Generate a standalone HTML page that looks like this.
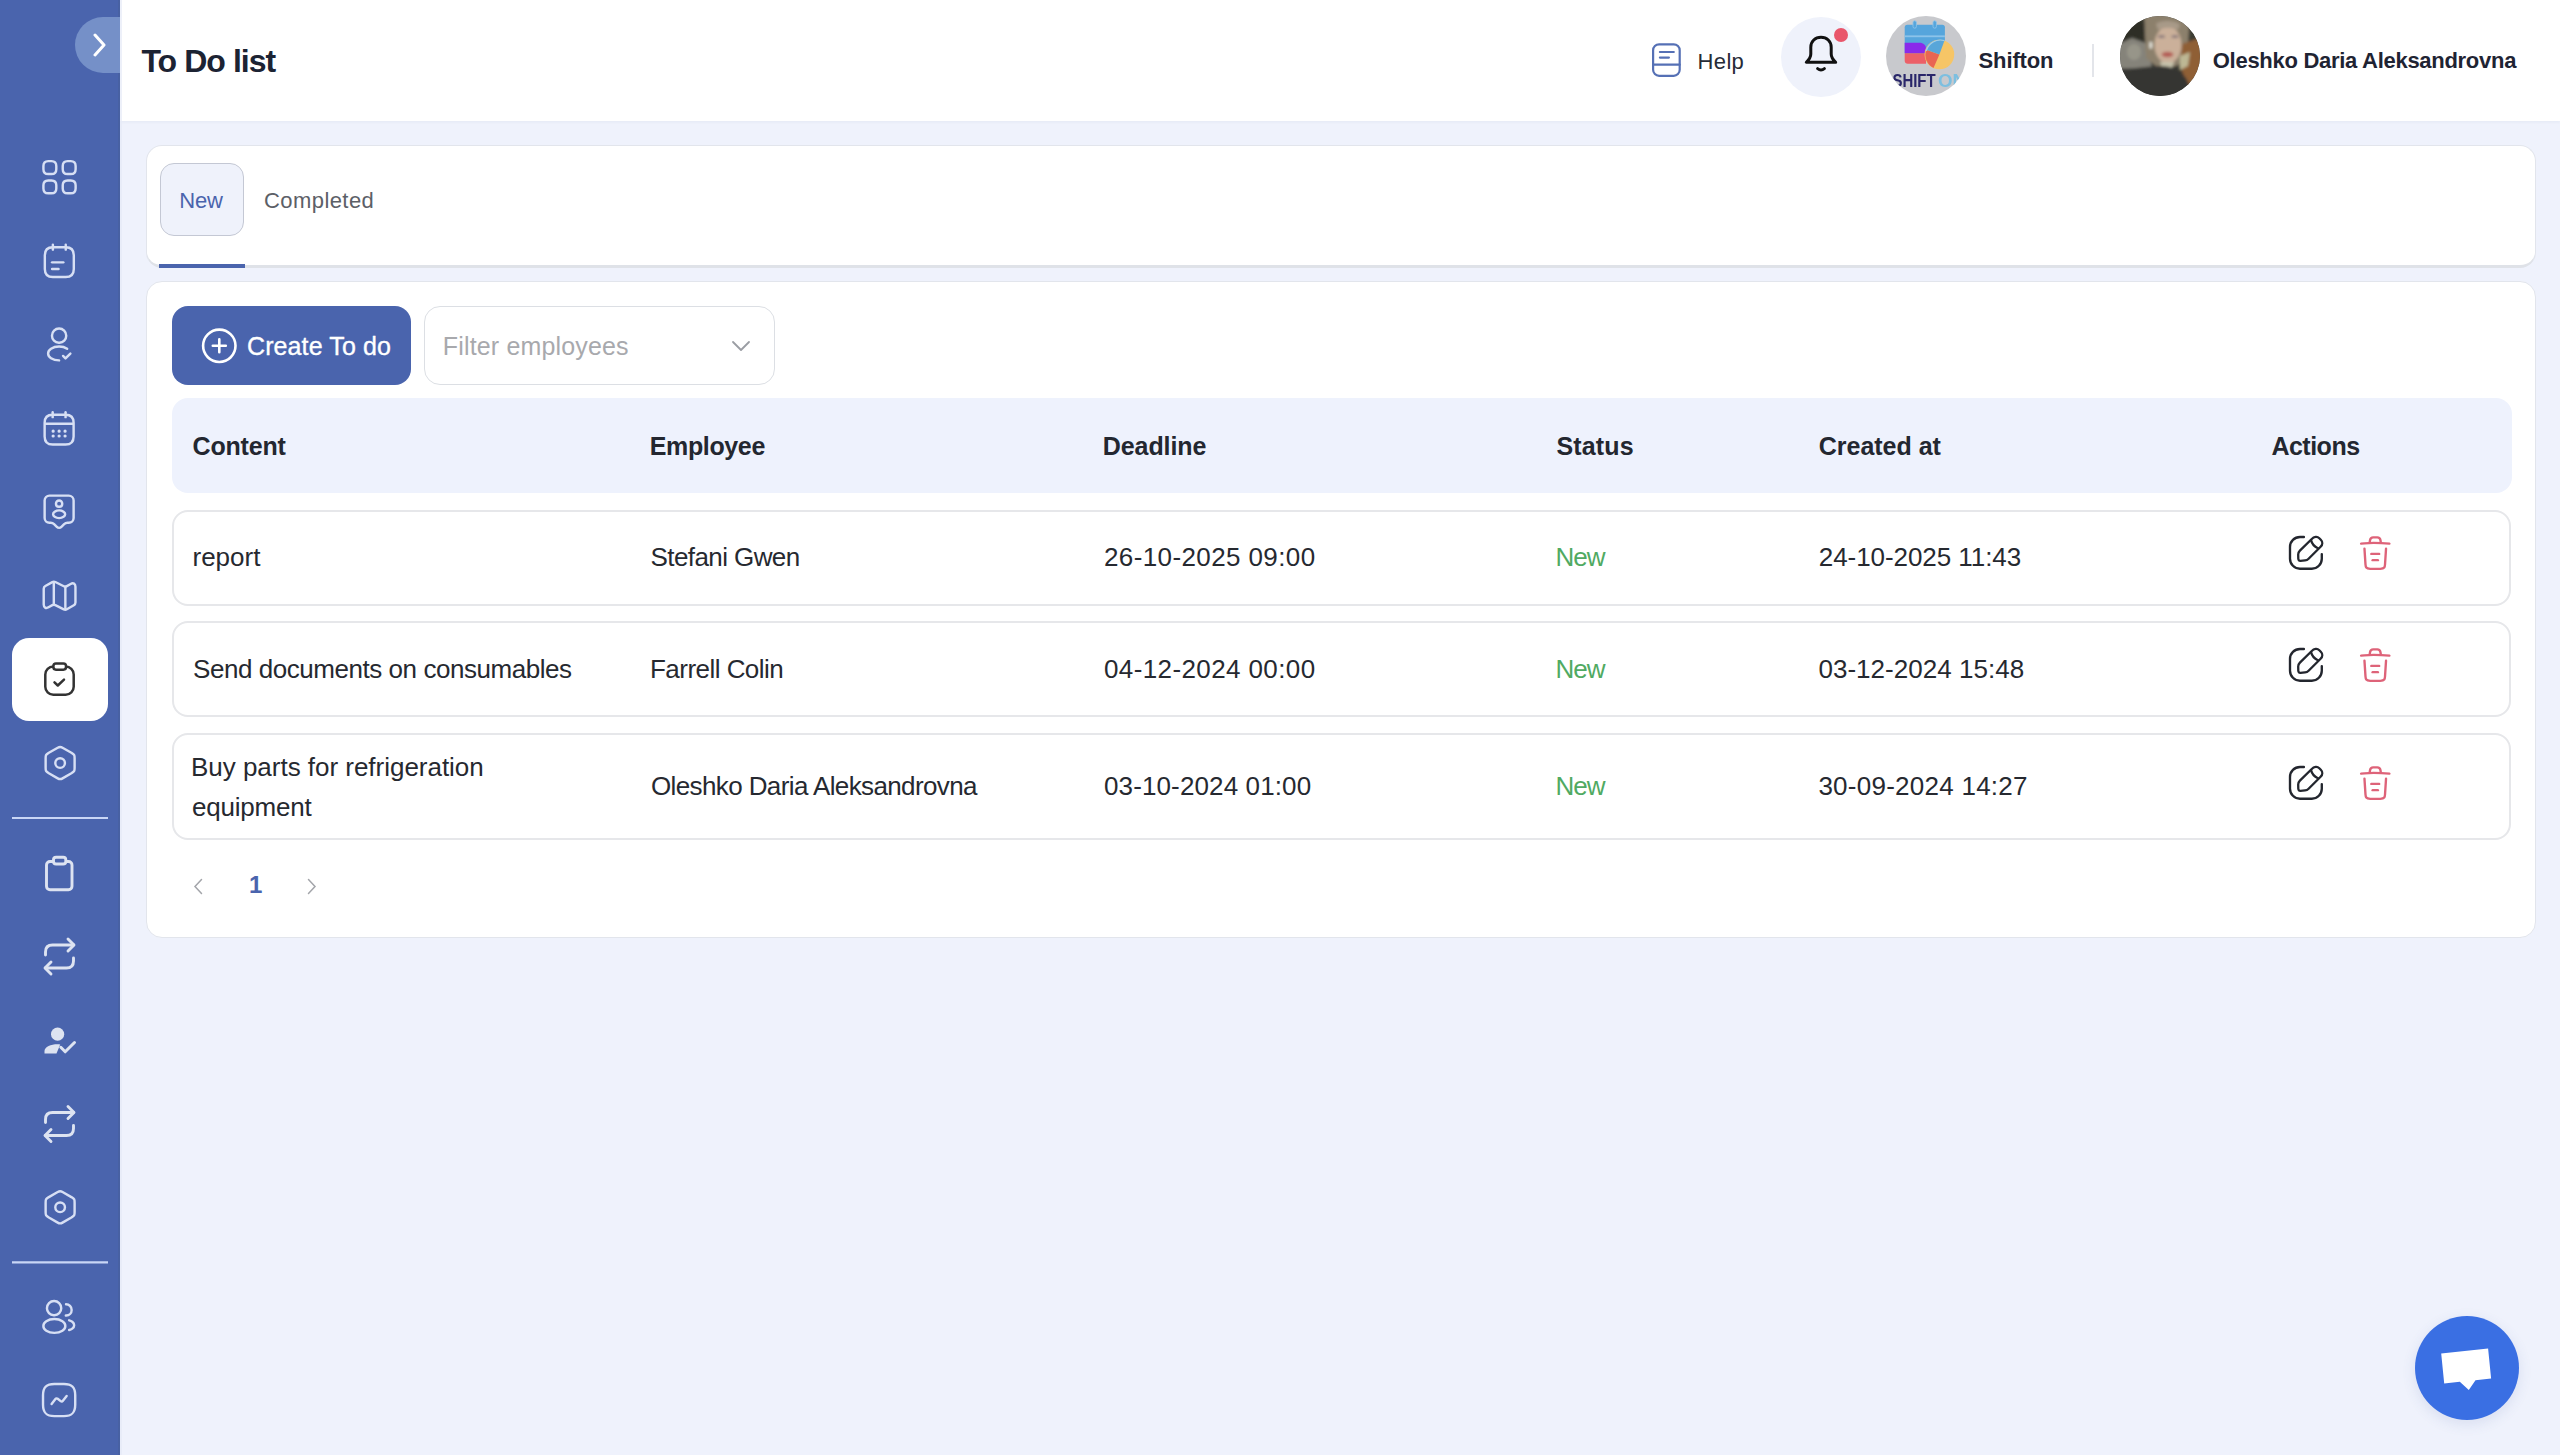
<!DOCTYPE html>
<html><head><meta charset="utf-8">
<style>
*{box-sizing:border-box;margin:0;padding:0}
html,body{width:2560px;height:1455px;overflow:hidden;background:#eff2fc;font-family:"Liberation Sans",sans-serif;color:#1f2330}
.a{position:absolute}
.t{position:absolute;line-height:1;white-space:nowrap}
#side{left:0;top:0;width:120px;height:1455px;background:#4a64ad}
#hdr{left:120px;top:0;width:2440px;height:121px;background:#fff;box-shadow:0 2px 2px rgba(40,50,80,0.03)}
.card{background:#fff;border:1px solid #e2e5ec;border-radius:16px}
.row{position:absolute;left:172px;width:2339px;background:#fff;border:2px solid #e6e7ea;border-radius:16px}
.ic{position:absolute;left:39px;width:40px;height:40px}
.ic svg{width:40px;height:40px;fill:none;stroke:#d9e1f5;stroke-width:1.5;stroke-linecap:round;stroke-linejoin:round}
.cell{font-size:26px;color:#262930;letter-spacing:-0.4px}
.hcell{font-size:25px;font-weight:700;color:#232730;letter-spacing:-0.2px}
.green{color:#50aa62}
</style></head>
<body>
<div id="side" class="a"></div>
<div id="hdr" class="a"></div>
<div class="a" style="left:118px;top:0;width:2px;height:1455px;background:#4861a3"></div>
<div class="a" style="left:120px;top:0;width:2px;height:1455px;background:#e6e9f6;opacity:0.7"></div>


<!-- sidebar icons -->
<svg class="a" style="left:0;top:0" width="120" height="1455" viewBox="0 0 120 1455" fill="none" stroke="#d7dff4" stroke-width="2.45" stroke-linecap="round" stroke-linejoin="round">
 <!-- 1 category -->
 <g transform="translate(40.2,157.9) scale(1.61)" stroke-width="1.5">
  <path d="M5 10H7C9 10 10 9 10 7V5C10 3 9 2 7 2H5C3 2 2 3 2 5V7C2 9 3 10 5 10Z"/>
  <path d="M17 10H19C21 10 22 9 22 7V5C22 3 21 2 19 2H17C15 2 14 3 14 5V7C14 9 15 10 17 10Z"/>
  <path d="M17 22H19C21 22 22 21 22 19V17C22 15 21 14 19 14H17C15 14 14 15 14 17V19C14 21 15 22 17 22Z"/>
  <path d="M5 22H7C9 22 10 21 10 19V17C10 15 9 14 7 14H5C3 14 2 15 2 17V19C2 21 3 22 5 22Z"/>
 </g>
 <!-- 2 note calendar -->
 <g transform="translate(40,241.6) scale(1.61)" stroke-width="1.5">
  <path d="M8 2V5"/><path d="M16 2V5"/>
  <path d="M21 8.5V17C21 20 19.5 22 16 22H8C4.5 22 3 20 3 17V8.5C3 5.5 4.5 3.5 8 3.5H16C19.5 3.5 21 5.5 21 8.5Z"/>
  <path d="M7.5 12.9H14.5"/><path d="M7.5 17H11.5"/>
 </g>
 <!-- 3 profile tick -->
 <g transform="translate(39.8,325.3) scale(1.61)" stroke-width="1.5">
  <path d="M14.44 19.05L15.96 20.57L19 17.53"/>
  <path d="M12.16 10.87C12.06 10.86 11.94 10.86 11.83 10.87C9.45 10.79 7.56 8.84 7.56 6.44C7.55 3.99 9.54 2 11.99 2C14.44 2 16.43 3.99 16.43 6.44C16.43 8.84 14.53 10.79 12.16 10.87Z"/>
  <path d="M11.99 21.81C10.17 21.81 8.36 21.35 6.98 20.43C4.56 18.81 4.56 16.17 6.98 14.56C9.73 12.72 14.24 12.72 16.99 14.56"/>
 </g>
 <!-- 4 calendar -->
 <g transform="translate(39.8,409.1) scale(1.61)" stroke-width="1.5">
  <path d="M8 2V5"/><path d="M16 2V5"/><path d="M3.5 9.09H20.5"/>
  <path d="M21 8.5V17C21 20 19.5 22 16 22H8C4.5 22 3 20 3 17V8.5C3 5.5 4.5 3.5 8 3.5H16C19.5 3.5 21 5.5 21 8.5Z"/>
  <path d="M15.69 13.7H15.7M15.69 16.7H15.7M11.99 13.7H12M11.99 16.7H12M8.29 13.7H8.3M8.29 16.7H8.3" stroke-width="2"/>
 </g>
 <!-- 5 user tag -->
 <g transform="translate(39.8,492.4) scale(1.61)" stroke-width="1.5">
  <path d="M18 18.86H17.24C16.44 18.86 15.68 19.17 15.12 19.73L13.41 21.42C12.63 22.19 11.36 22.19 10.58 21.42L8.87 19.73C8.31 19.17 7.54 18.86 6.75 18.86H6C4.34 18.86 3 17.53 3 15.88V4.97C3 3.32 4.34 1.99 6 1.99H18C19.66 1.99 21 3.32 21 4.97V15.88C21 17.52 19.66 18.86 18 18.86Z"/>
  <path d="M12.07 8.95C12.03 8.95 11.97 8.95 11.92 8.95C10.87 8.91 10.04 8.06 10.04 7C10.04 5.92 10.91 5.05 11.99 5.05C13.07 5.05 13.94 5.93 13.94 7C13.95 8.06 13.12 8.92 12.07 8.95Z"/>
  <path d="M9.25 11.96C7.92 12.85 7.92 14.3 9.25 15.19C10.76 16.2 13.24 16.2 14.75 15.19C16.08 14.3 16.08 12.85 14.75 11.96C13.24 10.96 10.77 10.96 9.25 11.96Z"/>
 </g>
 <!-- 6 map -->
 <g transform="translate(40.03,576.33) scale(1.61)" stroke-width="1.5">
  <path d="M2.29 7.78v9.73c0 1.9 1.35 2.68 2.99 1.74l2.35-1.34c.51-.29 1.36-.32 1.89-.05l5.25 2.63c.53.26 1.38.24 1.89-.05l4.33-2.48c.55-.32 1.01-1.1 1.01-1.74V6.49c0-1.9-1.35-2.68-2.99-1.74l-2.35 1.34c-.51.29-1.36.32-1.89.05L9.52 3.52c-.53-.26-1.38-.24-1.89.05L3.3 6.05c-.56.32-1.01 1.1-1.01 1.73Z"/>
  <path d="M8.56 4v13"/><path d="M15.73 6.62V20"/>
 </g>
 <!-- 7 active -->
 <rect x="12" y="638" width="96" height="83" rx="17" fill="#fff" stroke="none"/>
 <g stroke="#333" stroke-width="2.5">
  <rect x="45.3" y="666.5" width="28.4" height="28.3" rx="8"/>
  <rect x="53.4" y="663.5" width="12.6" height="6.2" rx="2.6" fill="#fff"/>
  <path d="M54.5 682.3 L57.8 685.5 L64 679.6"/>
 </g>
 <!-- 8 hexagon -->
 <g transform="translate(40.8,743.7) scale(1.61)" stroke-width="1.5">
  <path d="M3 9.11V14.88C3 17 3 17 5 18.35L10.5 21.53C11.33 22.01 12.68 22.01 13.5 21.53L19 18.35C21 17 21 17 21 14.89V9.11C21 7 21 7 19 5.65L13.5 2.47C12.68 1.99 11.33 1.99 10.5 2.47L5 5.65C3 7 3 7 3 9.11Z"/>
  <path d="M12 15C13.66 15 15 13.66 15 12C15 10.34 13.66 9 12 9C10.34 9 9 10.34 9 12C9 13.66 10.34 15 12 15Z"/>
 </g>
 <path d="M12 818 H108" stroke="#c9d6f6" stroke-width="2.2" stroke-linecap="butt"/>
 <!-- 9 clipboard -->
 <g stroke="#dde3f1" stroke-width="2.9">
  <rect x="46.5" y="861.5" width="25.5" height="28.3" rx="3.5"/>
  <rect x="53.5" y="857.2" width="12.3" height="6.8" rx="2.6" fill="#4a64ad"/>
 </g>
 <!-- 10 repeat -->
 <g stroke="#dde3f1" stroke-width="2.9">
  <path d="M45.5 955 V952 Q45.5 945 52.5 945 H73.5"/><path d="M68 939 L74 945 L68 951"/>
  <path d="M73.5 958 V961 Q73.5 968 66.5 968 H45.5"/><path d="M51 962 L45 968 L51 974"/>
 </g>
 <!-- 11 person check -->
 <g fill="#dde3f1" stroke="none">
  <circle cx="57.6" cy="1034.2" r="6.6"/>
  <path d="M44.5 1053.5 V1051 C44.5 1047 51 1044.3 57.5 1044.3 C58.5 1044.3 59.5 1044.4 60.2 1044.5 L56.5 1053.5 Z"/>
 </g>
 <path d="M60.8 1047.3 L65.2 1051.8 L74.5 1042.5" stroke="#dde3f1" stroke-width="3"/>
 <!-- 12 repeat -->
 <g stroke="#dde3f1" stroke-width="2.9" transform="translate(0,167.5)">
  <path d="M45.5 955 V952 Q45.5 945 52.5 945 H73.5"/><path d="M68 939 L74 945 L68 951"/>
  <path d="M73.5 958 V961 Q73.5 968 66.5 968 H45.5"/><path d="M51 962 L45 968 L51 974"/>
 </g>
 <!-- 13 hexagon -->
 <g transform="translate(40.8,1188) scale(1.61)" stroke-width="1.5">
  <path d="M3 9.11V14.88C3 17 3 17 5 18.35L10.5 21.53C11.33 22.01 12.68 22.01 13.5 21.53L19 18.35C21 17 21 17 21 14.89V9.11C21 7 21 7 19 5.65L13.5 2.47C12.68 1.99 11.33 1.99 10.5 2.47L5 5.65C3 7 3 7 3 9.11Z"/>
  <path d="M12 15C13.66 15 15 13.66 15 12C15 10.34 13.66 9 12 9C10.34 9 9 10.34 9 12C9 13.66 10.34 15 12 15Z"/>
 </g>
 <path d="M12 1262.3 H108" stroke="#c9d6f6" stroke-width="2.2" stroke-linecap="butt"/>
 <!-- 14 people -->
 <g transform="translate(39.6,1297.8) scale(1.61)" stroke-width="1.5">
  <path d="M9.16 10.87C9.06 10.86 8.94 10.86 8.83 10.87C6.45 10.79 4.56 8.84 4.56 6.44C4.56 3.99 6.54 2 9 2C11.45 2 13.44 3.99 13.44 6.44C13.43 8.84 11.54 10.79 9.16 10.87Z"/>
  <path d="M16.41 4C18.35 4 19.91 5.57 19.91 7.5C19.91 9.39 18.41 10.93 16.54 11C16.46 10.99 16.37 10.99 16.28 11"/>
  <path d="M4.16 14.56C1.74 16.18 1.74 18.82 4.16 20.43C6.91 22.27 11.42 22.27 14.17 20.43C16.59 18.81 16.59 16.17 14.17 14.56C11.43 12.73 6.92 12.73 4.16 14.56Z"/>
  <path d="M18.34 20C19.06 19.85 19.74 19.56 20.3 19.13C21.86 17.96 21.86 16.03 20.3 14.86C19.75 14.44 19.08 14.16 18.37 14"/>
 </g>
 <!-- 15 chart -->
 <g transform="translate(39.8,1380.7) scale(1.61)" stroke-width="1.5">
  <path d="M9 22H15C20 22 22 20 22 15V9C22 4 20 2 15 2H9C4 2 2 4 2 9V15C2 20 4 22 9 22Z"/>
  <path d="M7.33 14.49L9.71 11.4C10.05 10.96 10.68 10.88 11.12 11.22L12.95 12.66C13.39 13 14.02 12.92 14.36 12.49L16.67 9.51"/>
 </g>
</svg>

<!-- toggle -->
<div class="a" style="left:75px;top:17px;width:45px;height:56px;background:#7590c8;border-radius:28px 0 0 28px"></div>
<svg class="a" style="left:90px;top:33px" width="20" height="24" viewBox="0 0 20 24"><path d="M5 2 L14 12 L5 22" fill="none" stroke="#fff" stroke-width="3" stroke-linecap="round" stroke-linejoin="round"/></svg>

<div id="t0" class="t" style="left:141.40px;top:45px;font-size:32px;font-weight:700;color:#1c2333;letter-spacing:-0.945px">To Do list</div>


<!-- header right -->
<svg class="a" style="left:1640px;top:35px" width="50" height="50" viewBox="1640 35 50 50" fill="none" stroke="#5570b5" stroke-width="2.2" stroke-linecap="round" stroke-linejoin="round"><rect x="1653.1" y="44.3" width="26.6" height="31.5" rx="6"/><path d="M1653.1 64.7 H1679.7"/><path d="M1659.9 52 H1673.8"/><path d="M1659.9 57.6 H1668.9"/></svg>
<div id="t1" class="t" style="left:1697.60px;top:50.5px;font-size:22px;color:#262b36;letter-spacing:0.333px">Help</div>

<div class="a" style="left:1781px;top:17px;width:80px;height:80px;border-radius:50%;background:#eff2fb"></div>
<svg class="a" style="left:1795px;top:28px" width="52" height="50" viewBox="1795 28 52 50" fill="none" stroke="#111" stroke-width="3" stroke-linecap="round" stroke-linejoin="round"><path d="M1806.3 62.3 H1835.7 C1833.2 60 1831.2 57.5 1831.2 54 V47.2 C1831.2 41.2 1826.8 37.3 1821 37.3 C1815.2 37.3 1810.8 41.2 1810.8 47.2 V54 C1810.8 57.5 1808.8 60 1806.3 62.3 Z"/><path d="M1817.6 68.6 Q1821 71.3 1824.4 68.6"/></svg>
<div class="a" style="left:1833.5px;top:28px;width:14px;height:14px;border-radius:50%;background:#e9566b"></div>

<!-- shifton avatar -->
<div class="a" style="left:1886px;top:16px;width:80px;height:80px;border-radius:50%;background:#c8c9cd;overflow:hidden">
 <svg width="80" height="80" viewBox="0 0 80 80">
  <defs><filter id="bl1" x="-10%" y="-10%" width="120%" height="120%"><feGaussianBlur stdDeviation="0.6"/></filter></defs>
  <g filter="url(#bl1)">
  <rect x="18.7" y="8.8" width="40.2" height="30" rx="2.5" fill="#56a5dc"/>
  <rect x="18.7" y="19.4" width="40.2" height="1.8" fill="#8cc3ea"/>
  <rect x="27" y="4.8" width="3.4" height="7.4" rx="1.7" fill="#56a5dc" stroke="#8cc3ea" stroke-width="0.9"/>
  <rect x="47" y="4.8" width="3.4" height="7.4" rx="1.7" fill="#56a5dc" stroke="#8cc3ea" stroke-width="0.9"/>
  <path d="M18.7 26.8 H33.5 C37.5 26.8 40 29.5 40 32.5 V37.3 H18.7 Z" fill="#8a2cea"/>
  <path d="M18.7 37.3 H40 V47.8 H21.7 C19.9 47.8 18.7 46.6 18.7 44.8 Z" fill="#ec6068"/>
  <circle cx="53.4" cy="38.5" r="14.8" fill="#f6c566"/>
  <path d="M53.4 38.5 L40.2 33.8 A14.8 14.8 0 0 0 47.5 52 Z" fill="#e96553"/>
  <path d="M53.4 38.5 L58.5 24.6 A14.8 14.8 0 0 0 40.2 33.8 Z" fill="#58a6d9"/>
  <path d="M40.2 35 A14.8 14.8 0 0 1 58.5 24.6" fill="none" stroke="#9ccdee" stroke-width="1.2"/>
  <text x="6.4" y="70.8" font-family="Liberation Sans" font-weight="700" font-size="17.5" fill="#29286a" textLength="43.3" lengthAdjust="spacingAndGlyphs">SHIFT</text><text x="52.1" y="70.8" font-family="Liberation Sans" font-weight="700" font-size="17.5" fill="#7cbfe0" textLength="28" lengthAdjust="spacingAndGlyphs">ON</text>
  </g>
 </svg>
</div>
<div id="t2" class="t" style="left:1978.50px;top:50px;font-size:22px;font-weight:700;color:#1f2433;letter-spacing:-0.116px">Shifton</div>
<div class="a" style="left:2092px;top:44px;width:2px;height:33px;background:#e3e5ea"></div>

<!-- user avatar -->
<div class="a" style="left:2120px;top:16px;width:80px;height:80px;border-radius:50%;overflow:hidden;background:#3b3b36">
 <svg width="80" height="80" viewBox="0 0 80 80">
  <defs><filter id="bl2" x="-20%" y="-20%" width="140%" height="140%"><feGaussianBlur stdDeviation="1.5"/></filter></defs>
  <g filter="url(#bl2)">
  <rect x="-10" y="-10" width="100" height="100" fill="#3a3a33"/>
  <path d="M-5 5 H28 L26 30 L12 22 L-5 28 Z" fill="#2e2f28"/>
  <path d="M-5 30 L12 22 L28 28 L32 52 L14 60 L-5 58 Z" fill="#85837a"/>
  <ellipse cx="14" cy="36" rx="7" ry="8" fill="#979589"/>
  <path d="M24 -5 H70 L68 28 L64 46 L56 50 L36 50 L26 42 Z" fill="#8c806c"/>
  <path d="M62 28 L85 20 V72 L68 70 L60 50 Z" fill="#8f5f36"/>
  <path d="M60 40 L70 36 L68 50 L60 54 Z" fill="#bdb894"/>
  <ellipse cx="48" cy="29" rx="13.5" ry="18.5" fill="#cbb09a"/>
  <path d="M36 8 C40 4 56 4 60 9 L58 14 C52 11 44 11 38 14 Z" fill="#a89a88"/>
  <ellipse cx="41.5" cy="20.5" rx="3.6" ry="1.5" fill="#8a7a7c"/>
  <ellipse cx="55" cy="20.5" rx="3.6" ry="1.5" fill="#8a7a7c"/>
  <ellipse cx="47.5" cy="38.5" rx="5.8" ry="2.8" fill="#b45c55"/>
  <rect x="29.5" y="26" width="2.6" height="6.5" fill="#ecebe2"/>
  <path d="M40 46 H54 L52 52 H42 Z" fill="#c6c2ab"/>
  <path d="M-5 52 C10 54 28 50 40 50 C52 50 60 54 66 62 L72 75 V90 H-5 Z" fill="#363631"/>
  </g>
 </svg>
</div>
<div id="t3" class="t" style="left:2212.80px;top:50px;font-size:22px;font-weight:700;color:#1f2433;letter-spacing:-0.285px">Oleshko Daria Aleksandrovna</div>

<!-- tabs card -->
<div class="a card" style="left:146px;top:145px;width:2390px;height:123px;border-bottom:3px solid #dfe2e8"></div>
<div class="a" style="left:159px;top:264px;width:86px;height:4px;background:#4a64ad"></div>
<div class="a" style="left:160px;top:163px;width:84px;height:73px;background:#eff2fb;border:1.5px solid #c4c8d4;border-radius:14px"></div>
<div id="t4" class="t" style="left:179.20px;top:190px;font-size:22px;color:#4a64ad;letter-spacing:-0.100px">New</div>
<div id="t5" class="t" style="left:264.00px;top:190px;font-size:22px;color:#5c6067;letter-spacing:0.424px">Completed</div>

<!-- table card -->
<div class="a card" style="left:146px;top:281px;width:2390px;height:657px"></div>
<div class="a" style="left:172px;top:306px;width:239px;height:79px;background:#4a64ad;border-radius:16px"></div>
<svg class="a" style="left:200px;top:327px" width="38" height="38" viewBox="0 0 38 38" fill="none" stroke="#fff" stroke-width="2.6" stroke-linecap="round"><circle cx="19.3" cy="18.8" r="16.2"/><path d="M19.3 12.3 V25.3 M12.8 18.8 H25.8"/></svg>
<div id="t6" class="t" style="left:247.00px;top:334px;font-size:25px;color:#fff;-webkit-text-stroke:0.35px #fff;letter-spacing:0.109px">Create To do</div>
<div class="a" style="left:424px;top:306px;width:351px;height:79px;background:#fff;border:1.5px solid #dcdfe4;border-radius:16px"></div>
<div id="t7" class="t" style="left:442.80px;top:334px;font-size:25px;color:#a8a9ad;letter-spacing:0.160px">Filter employees</div>
<svg class="a" style="left:730px;top:336px" width="22" height="20" viewBox="0 0 22 20" fill="none" stroke="#9a9da3" stroke-width="1.8" stroke-linecap="round" stroke-linejoin="round"><path d="M3 6 L11 14 L19 6"/></svg>

<!-- table header -->
<div class="a" style="left:172px;top:398px;width:2340px;height:95px;background:#eef2fd;border-radius:16px"></div>
<div id="t8" class="t hcell" style="left:192.60px;top:434px;letter-spacing:-0.200px">Content</div>
<div id="t9" class="t hcell" style="left:649.80px;top:434px;letter-spacing:-0.372px">Employee</div>
<div id="t10" class="t hcell" style="left:1102.80px;top:434px;letter-spacing:-0.085px">Deadline</div>
<div id="t11" class="t hcell" style="left:1556.40px;top:434px;letter-spacing:0.160px">Status</div>
<div id="t12" class="t hcell" style="left:1818.80px;top:434px;letter-spacing:-0.023px">Created at</div>
<div id="t13" class="t hcell" style="left:2271.40px;top:434px;letter-spacing:-0.500px">Actions</div>

<!-- rows -->
<div class="row" style="top:510px;height:96px"></div>
<div id="t14" class="t cell" style="left:192.50px;top:544px;letter-spacing:0.000px">report</div>
<div id="t15" class="t cell" style="left:650.50px;top:544px;letter-spacing:-0.582px">Stefani Gwen</div>
<div id="t16" class="t cell" style="left:1104.00px;top:544px;letter-spacing:0.390px">26-10-2025 09:00</div>
<div id="t17" class="t cell green" style="left:1555.40px;top:544px;letter-spacing:-1.000px">New</div>
<div id="t18" class="t cell" style="left:1818.80px;top:544px;letter-spacing:-0.064px">24-10-2025 11:43</div>

<div class="row" style="top:621px;height:96px"></div>
<div id="t19" class="t cell" style="left:193.00px;top:656px;letter-spacing:-0.450px">Send documents on consumables</div>
<div id="t20" class="t cell" style="left:650.00px;top:656px;letter-spacing:-0.533px">Farrell Colin</div>
<div id="t21" class="t cell" style="left:1104.00px;top:656px;letter-spacing:0.390px">04-12-2024 00:00</div>
<div id="t22" class="t cell green" style="left:1555.40px;top:656px;letter-spacing:-1.000px">New</div>
<div id="t23" class="t cell" style="left:1818.40px;top:656px;letter-spacing:0.043px">03-12-2024 15:48</div>

<div class="row" style="top:733px;height:107px"></div>
<div id="t24" class="t cell" style="left:191.00px;top:754px;letter-spacing:-0.023px">Buy parts for refrigeration</div>
<div id="t25" class="t cell" style="left:192.00px;top:794px;letter-spacing:-0.226px">equipment</div>
<div id="t26" class="t cell" style="left:651.00px;top:773px;letter-spacing:-0.615px">Oleshko Daria Aleksandrovna</div>
<div id="t27" class="t cell" style="left:1104.00px;top:773px;letter-spacing:0.123px">03-10-2024 01:00</div>
<div id="t28" class="t cell green" style="left:1555.40px;top:773px;letter-spacing:-1.000px">New</div>
<div id="t29" class="t cell" style="left:1818.40px;top:773px;letter-spacing:0.257px">30-09-2024 14:27</div>

<!-- actions -->
<svg class="a" style="left:2270px;top:515px" width="140" height="80" viewBox="2270 515 140 80" fill="none" stroke-linecap="round" stroke-linejoin="round">
 <g transform="translate(0,0)">
  <path d="M2303.9 537 H2300 A10 10 0 0 0 2290 547 V558.7 A10 10 0 0 0 2300 568.7 H2311.8 A10 10 0 0 0 2321.8 558.7 V554.1" stroke="#23262e" stroke-width="2.35"/>
  <g stroke="#23262e" stroke-width="2.3">
   <path d="M2311.5 539.2 L2299.9 550.6 Q2298.2 552.3 2298.2 554.6 L2298.3 558.8 Q2298.4 560.9 2300.5 560.8 L2305 560.4 Q2307.1 560.2 2308.6 558.7 L2320.6 546.8 C2322.8 544.6 2322.8 541.7 2320.8 539.7 L2319.3 538.2 C2317.3 536.2 2314.2 536.5 2311.5 539.2 Z"/>
   <path d="M2311 540.1 Q2312.5 545.8 2317.9 548.2"/>
  </g>
  <g transform="translate(2356.35,534.2) scale(1.575)" stroke="#de6379" stroke-width="1.5">
   <path d="M21 5.98C17.67 5.65 14.32 5.48 10.98 5.48C9 5.48 7.02 5.58 5.04 5.78L3 5.98"/>
   <path d="M8.5 4.97L8.72 3.66C8.88 2.71 9 2 10.69 2H13.31C15 2 15.13 2.75 15.28 3.67L15.5 4.97"/>
   <path d="M18.85 9.14L18.2 19.21C18.09 20.78 18 22 15.21 22H8.79C6 22 5.91 20.78 5.8 19.21L5.15 9.14"/>
   <path d="M10.33 16.5H13.66"/><path d="M9.5 12.5H14.5"/>
  </g>
 </g>
</svg>
<svg class="a" style="left:2270px;top:627px" width="140" height="80" viewBox="2270 627 140 80" fill="none" stroke-linecap="round" stroke-linejoin="round">
 <g transform="translate(0,112)">
  <path d="M2303.9 537 H2300 A10 10 0 0 0 2290 547 V558.7 A10 10 0 0 0 2300 568.7 H2311.8 A10 10 0 0 0 2321.8 558.7 V554.1" stroke="#23262e" stroke-width="2.35"/>
  <g stroke="#23262e" stroke-width="2.3">
   <path d="M2311.5 539.2 L2299.9 550.6 Q2298.2 552.3 2298.2 554.6 L2298.3 558.8 Q2298.4 560.9 2300.5 560.8 L2305 560.4 Q2307.1 560.2 2308.6 558.7 L2320.6 546.8 C2322.8 544.6 2322.8 541.7 2320.8 539.7 L2319.3 538.2 C2317.3 536.2 2314.2 536.5 2311.5 539.2 Z"/>
   <path d="M2311 540.1 Q2312.5 545.8 2317.9 548.2"/>
  </g>
  <g transform="translate(2356.35,534.2) scale(1.575)" stroke="#de6379" stroke-width="1.5">
   <path d="M21 5.98C17.67 5.65 14.32 5.48 10.98 5.48C9 5.48 7.02 5.58 5.04 5.78L3 5.98"/>
   <path d="M8.5 4.97L8.72 3.66C8.88 2.71 9 2 10.69 2H13.31C15 2 15.13 2.75 15.28 3.67L15.5 4.97"/>
   <path d="M18.85 9.14L18.2 19.21C18.09 20.78 18 22 15.21 22H8.79C6 22 5.91 20.78 5.8 19.21L5.15 9.14"/>
   <path d="M10.33 16.5H13.66"/><path d="M9.5 12.5H14.5"/>
  </g>
 </g>
</svg>
<svg class="a" style="left:2270px;top:744.5px" width="140" height="80" viewBox="2270 744.5 140 80" fill="none" stroke-linecap="round" stroke-linejoin="round">
 <g transform="translate(0,229.5)">
  <path d="M2303.9 537 H2300 A10 10 0 0 0 2290 547 V558.7 A10 10 0 0 0 2300 568.7 H2311.8 A10 10 0 0 0 2321.8 558.7 V554.1" stroke="#23262e" stroke-width="2.35"/>
  <g stroke="#23262e" stroke-width="2.3">
   <path d="M2311.5 539.2 L2299.9 550.6 Q2298.2 552.3 2298.2 554.6 L2298.3 558.8 Q2298.4 560.9 2300.5 560.8 L2305 560.4 Q2307.1 560.2 2308.6 558.7 L2320.6 546.8 C2322.8 544.6 2322.8 541.7 2320.8 539.7 L2319.3 538.2 C2317.3 536.2 2314.2 536.5 2311.5 539.2 Z"/>
   <path d="M2311 540.1 Q2312.5 545.8 2317.9 548.2"/>
  </g>
  <g transform="translate(2356.35,534.2) scale(1.575)" stroke="#de6379" stroke-width="1.5">
   <path d="M21 5.98C17.67 5.65 14.32 5.48 10.98 5.48C9 5.48 7.02 5.58 5.04 5.78L3 5.98"/>
   <path d="M8.5 4.97L8.72 3.66C8.88 2.71 9 2 10.69 2H13.31C15 2 15.13 2.75 15.28 3.67L15.5 4.97"/>
   <path d="M18.85 9.14L18.2 19.21C18.09 20.78 18 22 15.21 22H8.79C6 22 5.91 20.78 5.8 19.21L5.15 9.14"/>
   <path d="M10.33 16.5H13.66"/><path d="M9.5 12.5H14.5"/>
  </g>
 </g>
</svg>
<!-- pagination -->
<svg class="a" style="left:190px;top:875px" width="18" height="22" viewBox="0 0 18 22" fill="none" stroke="#a3a5aa" stroke-width="1.5" stroke-linecap="round"><path d="M11.5 4.5 L5 11.5 L11.5 18.5"/></svg>
<div id="t30" class="t" style="left:249px;top:873px;font-size:24px;font-weight:700;color:#4a64ad">1</div>
<svg class="a" style="left:302px;top:875px" width="18" height="22" viewBox="0 0 18 22" fill="none" stroke="#a3a5aa" stroke-width="1.5" stroke-linecap="round"><path d="M6.5 4.5 L13 11.5 L6.5 18.5"/></svg>

<!-- chat -->
<div class="a" style="left:2415px;top:1316px;width:104px;height:104px;border-radius:50%;background:#3a6fe3;box-shadow:0 4px 14px rgba(60,80,160,0.12)"></div>
<svg class="a" style="left:2430px;top:1340px" width="70" height="60" viewBox="2430 1340 70 60"><path d="M2441.2 1353.4 L2488.1 1348.6 L2491.1 1378.6 L2475.5 1380.2 L2468.8 1390 L2459.8 1381.8 L2444.2 1383.4 Z" fill="#fff"/></svg>

</body></html>
